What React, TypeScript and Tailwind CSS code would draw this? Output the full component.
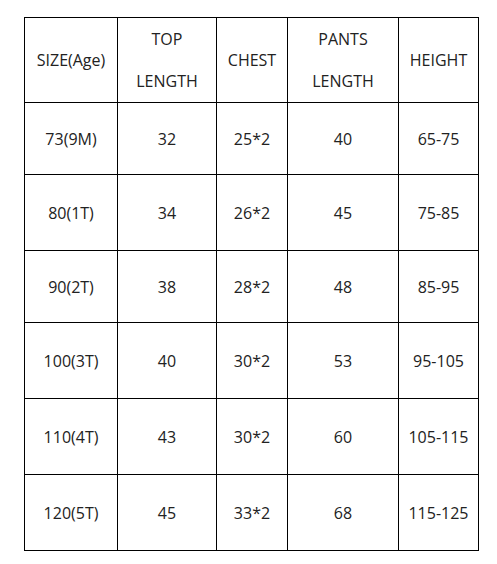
const rows = [
  { size: "73(9M)", top: "32", chest: "25*2", pants: "40", height: "65-75", h: "h-[72px]" },
  { size: "80(1T)", top: "34", chest: "26*2", pants: "45", height: "75-85", h: "h-[76px]" },
  { size: "90(2T)", top: "38", chest: "28*2", pants: "48", height: "85-95", h: "h-[72px]" },
  { size: "100(3T)", top: "40", chest: "30*2", pants: "53", height: "95-105", h: "h-[76px]" },
  { size: "110(4T)", top: "43", chest: "30*2", pants: "60", height: "105-115", h: "h-[76px]" },
  { size: "120(5T)", top: "45", chest: "33*2", pants: "68", height: "115-125", h: "h-[76px]" },
];

const cell = "border border-black p-0 text-center align-middle";

export default function App() {
  return (
    <div className="min-h-[564px] w-[497px] bg-white pl-[24px] pt-[17px] font-['Open_Sans','Noto_Sans',sans-serif] text-[16px] text-[#222]">
      <table className="w-[454px] table-fixed border-collapse">
        <colgroup>
          <col className="w-[93px]" />
          <col className="w-[99px]" />
          <col className="w-[71px]" />
          <col className="w-[111px]" />
          <col className="w-[80px]" />
        </colgroup>
        <thead>
          <tr className="h-[83px] leading-[42px]">
            <th className={`${cell} font-normal`}>SIZE(Age)</th>
            <th className={`${cell} font-normal`}>
              TOP
              <br />
              LENGTH
            </th>
            <th className={`${cell} font-normal`}>CHEST</th>
            <th className={`${cell} font-normal`}>
              PANTS
              <br />
              LENGTH
            </th>
            <th className={`${cell} font-normal`}>HEIGHT</th>
          </tr>
        </thead>
        <tbody>
          {rows.map((r) => (
            <tr key={r.size} className={r.h}>
              <td className={cell}>{r.size}</td>
              <td className={cell}>{r.top}</td>
              <td className={cell}>{r.chest}</td>
              <td className={cell}>{r.pants}</td>
              <td className={cell}>{r.height}</td>
            </tr>
          ))}
        </tbody>
      </table>
    </div>
  );
}
